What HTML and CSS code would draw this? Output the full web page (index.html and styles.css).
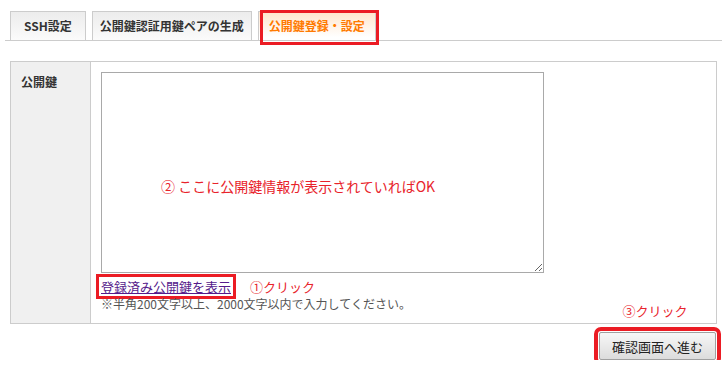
FILE: index.html
```html
<!DOCTYPE html>
<html lang="ja">
<head>
<meta charset="UTF-8">
<title>公開鍵登録・設定</title>
<link rel="stylesheet" href="styles.css">
</head>
<body>
<ul class="tabs">
  <li class="tab tab-ssh">SSH設定</li>
  <li class="tab tab-gen">公開鍵認証用鍵ペアの生成</li>
  <li class="tab active">公開鍵登録・設定</li>
</ul>

<table class="form">
  <tr>
    <th>公開鍵</th>
    <td>
      <div class="area-wrap">
        <textarea class="key"></textarea>
        <span class="note-red note-2">② ここに公開鍵情報が表示されていればOK</span>
      </div>
      <div class="links">
        <a href="#" class="show-key">登録済み公開鍵を表示</a>
        <span class="note-red note-1">①クリック</span>
      </div>
      <p class="hint">※半角200文字以上、2000文字以内で入力してください。</p>
      <span class="note-red note-3">③クリック</span>
    </td>
  </tr>
</table>

<div class="actions">
  <button class="btn">確認画面へ進む</button>
</div>
</body>
</html>
```

FILE: styles.css
```css
*{ box-sizing:border-box; }
body{ margin:0; font-family:"Noto Sans CJK JP","Noto Sans",sans-serif; font-size:12px; color:#333; background:#fff; }

.tabs{ display:flex; gap:6px; list-style:none; margin:11px 3px 0 5px; padding:0 0 0 5px; border-bottom:1px solid #ccc; }
.tab{ position:relative; height:29px; line-height:28px; padding:0 10px; border:1px solid #ccc; border-bottom:none; font-weight:700; font-size:12px; color:#333; background:linear-gradient(#ececec,#fbfbfb); }
.tab-ssh{ padding:0 13px; }
.tab-gen{ padding:0 7px; }
.tab.active{ color:#ff7a00; background:linear-gradient(#ffe6cc,#fff 90%); }
.tab.active::after{ content:""; position:absolute; left:1px; right:-4px; top:-2px; bottom:-5px; border:3px solid #eb1c24; }

.form{ position:relative; margin:20px 8px 0 10px; width:707px; border-collapse:collapse; border:1px solid #ccc; }
.form th{ width:80px; padding:12px 10px; vertical-align:top; text-align:left; background:#f0f0f0; border-right:1px solid #ccc; font-size:12px; font-weight:700; line-height:16px; }
.form td{ padding:10px 10px 12px; vertical-align:top; }

.area-wrap{ position:relative; width:443px; }
.key{ display:block; width:443px; height:201px; margin:0; border:1px solid #a9a9a9; background:#fff; }

.note-red{ color:#e8232b; font-size:13px; line-height:18px; }
.note-2{ position:absolute; left:60px; top:105px; font-size:14px; }
.note-3{ position:absolute; left:612px; top:240px; }

.links{ display:flex; align-items:center; gap:17px; margin-top:4px; line-height:19px; }
.show-key{ display:inline-block; padding:0 2px; margin-left:-2px; font-size:13px; line-height:19px; color:#551a8b; text-decoration:underline; outline:3px solid #eb1c24; }
.hint{ margin:0; color:#555; font-size:12px; line-height:15px; }

.actions{ display:flex; justify-content:flex-end; padding:8px 9px 0 0; }
.btn{ height:28px; padding:0 12px; font-family:inherit; font-size:13px; color:#222; border:1px solid #a0a0a0; border-radius:2px; background:linear-gradient(#f7f7f7,#dcdcdc); outline:4px solid #eb1c24; outline-offset:1px; }
```
